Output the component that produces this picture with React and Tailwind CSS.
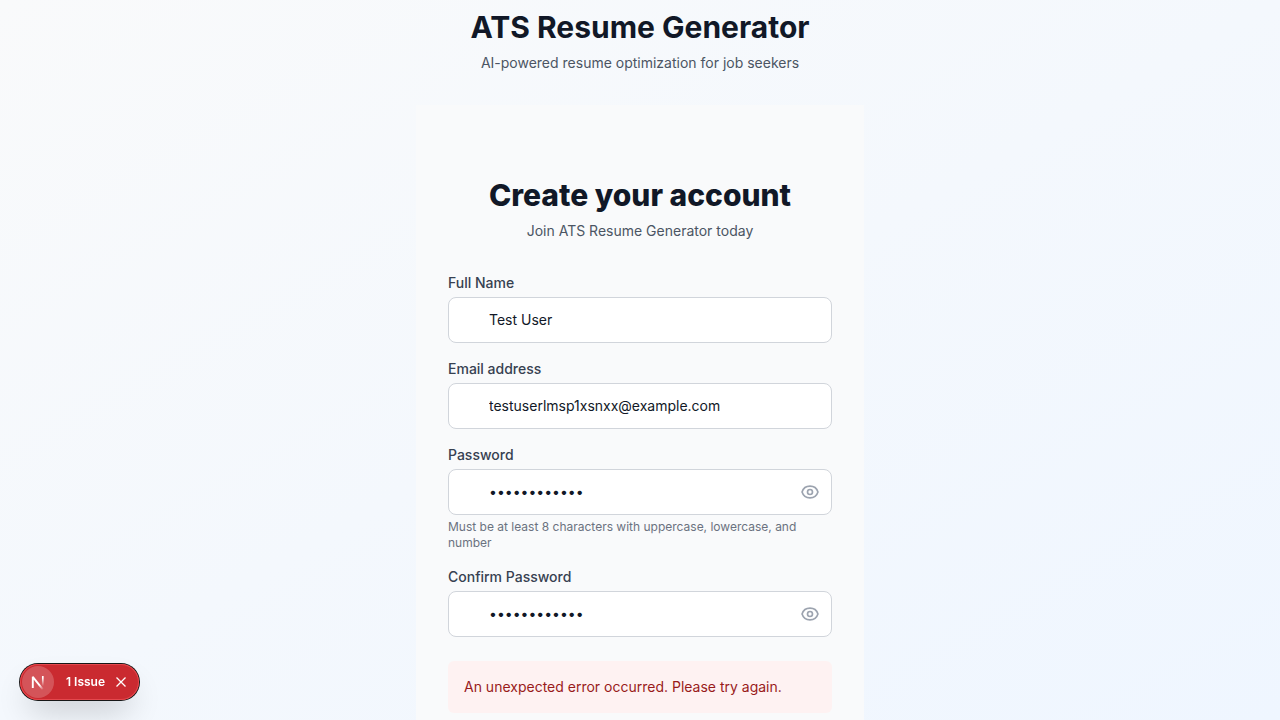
import React, { useState } from "react";

function EyeIcon() {
  return (
    <svg className="size-5" viewBox="0 0 24 24" fill="none" stroke="currentColor" strokeWidth="2" strokeLinecap="round" strokeLinejoin="round" aria-hidden="true">
      <path d="M15 12a3 3 0 11-6 0 3 3 0 016 0z" />
      <path d="M2.458 12C3.732 7.943 7.523 5 12 5c4.478 0 8.268 2.943 9.542 7-1.274 4.057-5.064 7-9.542 7-4.477 0-8.268-2.943-9.542-7z" />
    </svg>
  );
}

function Field({ id, label, type = "text", value, hint }) {
  const [visible, setVisible] = useState(false);
  const secret = type === "password";
  return (
    <div>
      <label htmlFor={id} className="block text-sm font-medium text-[#374151]">
        {label}
      </label>
      <div className="relative mt-1">
        <input
          id={id}
          type={secret && visible ? "text" : type}
          defaultValue={value}
          className="block w-full rounded-lg border border-[#d1d5db] bg-white px-10 py-3 text-sm text-[#111827]"
        />
        {secret && (
          <button
            type="button"
            aria-label={visible ? "Hide password" : "Show password"}
            onClick={() => setVisible(!visible)}
            className="absolute inset-y-0 right-0 flex items-center pr-3 text-[#9ca3af]"
          >
            <EyeIcon />
          </button>
        )}
      </div>
      {hint && <p className="mt-1 text-xs text-[#6b7280]">{hint}</p>}
    </div>
  );
}

function IssueBadge() {
  return (
    <div className="fixed bottom-5 left-5 flex h-9 items-center rounded-full bg-[#ca2a30] p-0.5 pr-3 text-white shadow-[0_0_0_1px_#171717,inset_0_0_0_1px_#e5484d,0_16px_32px_-8px_rgba(0,0,0,0.24)]">
      <button type="button" aria-label="Open developer tools" className="flex size-8 items-center justify-center rounded-full bg-white/20">
        <svg className="size-8" viewBox="0 0 32 32" fill="none" aria-hidden="true">
          <defs>
            <linearGradient id="diag" x1="17" y1="16" x2="22" y2="23" gradientUnits="userSpaceOnUse">
              <stop offset="0.3" stopColor="white" />
              <stop offset="1" stopColor="white" stopOpacity="0" />
            </linearGradient>
            <linearGradient id="stem" x1="21" y1="10" x2="21" y2="20" gradientUnits="userSpaceOnUse">
              <stop offset="0.2" stopColor="white" />
              <stop offset="1" stopColor="white" stopOpacity="0" />
            </linearGradient>
          </defs>
          <path d="M10.8 22V10.8L20.8 23.4" stroke="url(#diag)" strokeWidth="1.9" strokeLinejoin="bevel" />
          <path d="M20.8 10v10" stroke="url(#stem)" strokeWidth="1.7" />
        </svg>
      </button>
      <button type="button" className="ml-3 text-xs font-semibold">1 Issue</button>
      <button type="button" aria-label="Dismiss" className="ml-2.5">
        <svg className="size-3" viewBox="0 0 12 12" fill="none" stroke="currentColor" strokeWidth="1.3" aria-hidden="true">
          <path d="M1.5 1.5l9 9M10.5 1.5l-9 9" />
        </svg>
      </button>
    </div>
  );
}

export default function App() {
  return (
    <div className="h-screen overflow-hidden bg-linear-to-br/srgb from-[#f9fafb] to-[#eff6ff] font-[Inter,sans-serif]">
      <main className="mx-auto w-full max-w-md pt-[9px]">
        <header className="text-center">
          <h1 className="text-3xl font-bold text-[#111827]">ATS Resume Generator</h1>
          <p className="mt-2 text-sm text-[#4b5563]">AI-powered resume optimization for job seekers</p>
        </header>
        <section className="mt-8 bg-[#f9fafb] px-8 pt-[72px] pb-12">
          <div className="text-center">
            <h2 className="text-3xl font-extrabold text-[#111827]">Create your account</h2>
            <p className="mt-2 text-sm text-[#4b5563]">Join ATS Resume Generator today</p>
          </div>
          <form className="mt-8 flex flex-col gap-6">
            <div className="flex flex-col gap-4">
              <Field id="name" label="Full Name" value="Test User" />
              <Field id="email" label="Email address" type="email" value="testuserlmsp1xsnxx@example.com" />
              <Field id="password" label="Password" type="password" value="TestPass1234" hint="Must be at least 8 characters with uppercase, lowercase, and number" />
              <Field id="confirm" label="Confirm Password" type="password" value="TestPass1234" />
            </div>
            <div role="alert" className="rounded-md bg-[#fef2f2] p-4 text-sm text-[#991b1b]">
              An unexpected error occurred. Please try again.
            </div>
          </form>
        </section>
      </main>
      <IssueBadge />
    </div>
  );
}
